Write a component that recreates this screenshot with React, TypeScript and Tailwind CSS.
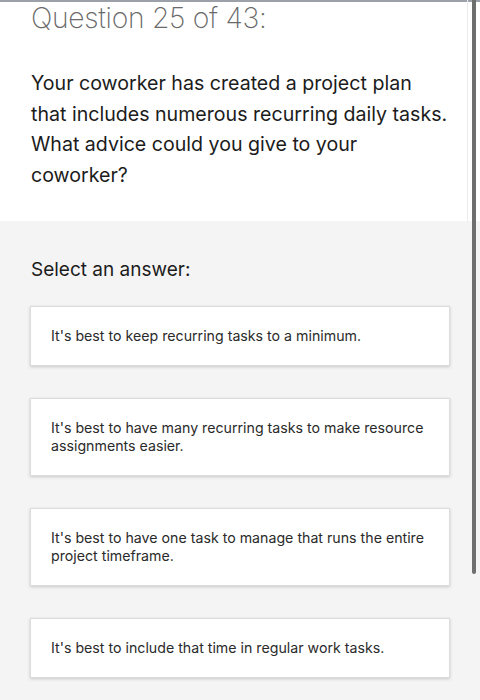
const answers = [
  "It's best to keep recurring tasks to a minimum.",
  "It's best to have many recurring tasks to make resource assignments easier.",
  "It's best to have one task to manage that runs the entire project timeframe.",
  "It's best to include that time in regular work tasks.",
];

export default function App() {
  return (
    <div className="relative min-h-[700px] bg-[#f4f4f4] font-['Inter',sans-serif] overflow-hidden">
      <div className="h-[2px] bg-[#9ca1a9]" />

      <div className="bg-white pl-[31px] pr-[20px] pb-[30px]">
        <h1 className="pb-[2px] text-[28.3px] leading-[32px] font-extralight text-[#6a6a6a] tracking-[-0.3px]">
          Question 25 of 43:
        </h1>
        <p className="mt-[32px] text-[19.6px] leading-[30.7px] text-[#1c1c1c]">
          Your coworker has created a project plan
          <br />
          that includes numerous recurring daily tasks.
          <br />
          What advice could you give to your
          <br />
          coworker?
        </p>
      </div>

      <div className="px-[30px] pt-[35px]">
        <h2 className="pl-px text-[19px] leading-[28px] text-[#1c1c1c]">Select an answer:</h2>
        <div className="mt-[22px] flex flex-col gap-[32px]">
          {answers.map((a) => (
            <div
              key={a}
              className="bg-white border border-[#dcdcdc] shadow-[0_1px_3px_rgba(0,0,0,0.18)] px-[20px] py-[20px] text-[14.2px] leading-[18px] text-[#2a2a2a]"
            >
              {a}
            </div>
          ))}
        </div>
      </div>

      {/* scrollbar */}
      <div className="absolute top-0 right-[4px] w-[4px] h-[574px] bg-[#6e6e6e] rounded-b-sm" />
      <div className="absolute top-0 right-[12px] w-px h-[222px] bg-[#ececec]" />
    </div>
  );
}
